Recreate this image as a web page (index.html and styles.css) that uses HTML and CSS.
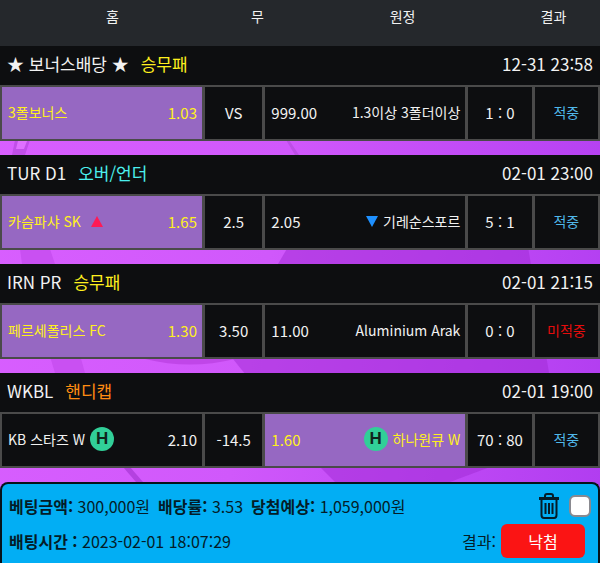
FILE: index.html
```
<!DOCTYPE html>
<html lang="ko">
  <head>
    <meta charset="UTF-8" />
    <meta name="viewport" content="width=device-width, initial-scale=1.0" />
    <title>베팅내역</title>
    <link rel="stylesheet" href="styles.css">
  </head>
  <body>
    <svg class="bg" viewBox="0 0 600 563" preserveAspectRatio="none" aria-hidden="true">
      <path d="M12 155L15 140H30L25 155Z" fill="#c04fe8" />
      <path d="M16 149L18 141H27L24 149Z" fill="#df70ff" />
      <path d="M286 140H289L299 155H295Z" fill="#bd4ee6" />
      <path d="M20 249H50L55 264L85 373H55L22 264Z" fill="#c950f2" />
      <path d="M295 235H526L549 373L490 467L450 482H335L320 467L233 359L278 264Z" fill="#a02ad4" fill-opacity="0.5" />
      <path d="M145 359Q190 370 235 359Z" fill="#c046e8" />
      <path d="M123 467H130L143 482H136Z" fill="#b441e0" />
    </svg>
    <div class="head">
      <span class="head-team">홈</span>
      <span class="head-draw">무</span>
      <span class="head-team">원정</span>
      <span class="head-result">결과</span>
    </div>

    <div class="game">
      <div class="title">
        <span>★ 보너스배당 ★</span>
        <span class="type yellow">승무패</span>
        <span class="date">12-31 23:58</span>
      </div>
      <table>
        <tr>
          <td class="team on"><div class="pick"><span>3폴보너스</span><span class="odds">1.03</span></div></td>
          <td class="draw">VS</td>
          <td class="team"><div class="pick"><span class="odds">999.00</span><span>1.3이상 3폴더이상</span></div></td>
          <td class="score">1 : 0</td>
          <td class="result hit">적중</td>
        </tr>
      </table>
    </div>

    <div class="game">
      <div class="title">
        <span>TUR D1</span>
        <span class="type cyan">오버/언더</span>
        <span class="date">02-01 23:00</span>
      </div>
      <table>
        <tr>
          <td class="team on">
            <div class="pick">
              <span class="name">카슴파샤 SK <i class="up"></i></span>
              <span class="odds">1.65</span>
            </div>
          </td>
          <td class="draw">2.5</td>
          <td class="team">
            <div class="pick">
              <span class="odds">2.05</span>
              <span class="name"><i class="down"></i> 기레순스포르</span>
            </div>
          </td>
          <td class="score">5 : 1</td>
          <td class="result hit">적중</td>
        </tr>
      </table>
    </div>

    <div class="game">
      <div class="title">
        <span>IRN PR</span>
        <span class="type yellow">승무패</span>
        <span class="date">02-01 21:15</span>
      </div>
      <table>
        <tr>
          <td class="team on"><div class="pick"><span>페르세폴리스 FC</span><span class="odds">1.30</span></div></td>
          <td class="draw">3.50</td>
          <td class="team"><div class="pick"><span class="odds">11.00</span><span>Aluminium Arak</span></div></td>
          <td class="score">0 : 0</td>
          <td class="result miss">미적중</td>
        </tr>
      </table>
    </div>

    <div class="game">
      <div class="title">
        <span>WKBL</span>
        <span class="type orange">핸디캡</span>
        <span class="date">02-01 19:00</span>
      </div>
      <table>
        <tr>
          <td class="team">
            <div class="pick">
              <span class="name">KB 스타즈 W <b class="badge">H</b></span>
              <span class="odds">2.10</span>
            </div>
          </td>
          <td class="draw">-14.5</td>
          <td class="team on">
            <div class="pick">
              <span class="odds">1.60</span>
              <span class="name"><b class="badge">H</b> 하나원큐 W</span>
            </div>
          </td>
          <td class="score">70 : 80</td>
          <td class="result hit">적중</td>
        </tr>
      </table>
    </div>

    <div class="summary">
      <div class="line">
        <div class="info">
          <span><b>베팅금액:</b> 300,000원</span>
          <span><b>배당률:</b> 3.53</span>
          <span><b>당첨예상:</b> 1,059,000원</span>
        </div>
        <button class="delete" type="button" aria-label="삭제">
          <svg width="22" height="26" viewBox="0 0 22 26" fill="none" stroke="#041c28" stroke-width="2">
            <path d="M1 5.5H21" stroke-width="3" />
            <path d="M7 5V3Q7 1 9 1H13Q15 1 15 3V5" />
            <path d="M3.500 6V22Q3.500 25 6 25H16Q18.500 25 18.500 22V6" />
            <path d="M7.500 10V21M11 10V21M14.500 10V21" />
          </svg>
        </button>
        <input class="check" type="checkbox" aria-label="선택" />
      </div>
      <div class="line">
        <div class="info"><span><b>배팅시간 :</b> 2023-02-01 18:07:29</span></div>
        <span>결과:</span>
        <button class="status" type="button">낙첨</button>
      </div>
    </div>
  </body>
</html>
```
FILE: styles.css
```
* {
  box-sizing: border-box;
}
body {
  margin: 0;
  background: linear-gradient(100deg, #d95fff 0%, #d058fb 45%, #b03cf0 100%);
  color: #f2f2f2;
  font-family: "Noto Sans CJK KR", sans-serif;
  font-size: 14px;
}
.bg {
  position: absolute;
  top: 0;
  left: 0;
  width: 100%;
  height: 100%;
  z-index: -1;
}
.head {
  display: flex;
  height: 46px;
  padding: 5px 8px 0 0;
  background: #25282c;
  line-height: 22px;
  text-align: center;
}
.head-team {
  width: 38%;
}
.head-draw {
  width: 11%;
}
.head-result {
  width: 13%;
}
.game {
  margin-bottom: 14px;
}
.title {
  display: flex;
  height: 39px;
  padding: 0 7px;
  background: #0d0e10;
  font-size: 17px;
  line-height: 36px;
}
.type {
  margin-left: 12px;
}
.date {
  margin-left: auto;
}
.yellow {
  color: #fff01e;
}
.cyan {
  color: #4cf0ee;
}
.orange {
  color: #ff8c12;
}
table {
  width: 100%;
  height: 56px;
  table-layout: fixed;
  border-spacing: 1px;
  background: #4a4a4a;
}
td {
  padding: 0 0 2px;
  border: 1px solid #4a4a4a;
  background: #0d0e10;
  text-align: center;
}
.team {
  width: 34%;
  padding: 0 5px 2px 6px;
}
.draw {
  width: 10%;
  font-size: 15px;
}
.score {
  width: 11%;
  font-size: 15px;
}
.result {
  width: 11%;
}
.pick {
  display: flex;
  align-items: center;
  justify-content: space-between;
}
.odds {
  font-size: 15px;
}
.on {
  background: #9668c2;
  color: #fff01e;
}
.hit {
  color: #50b8ea;
}
.miss {
  color: #e60c0c;
}
.name {
  display: flex;
  align-items: center;
  gap: 5px;
}
.up,
.down {
  border: 6px solid transparent;
}
.up {
  margin-left: 5px;
  border-top: 0;
  border-bottom: 11px solid #ff1a55;
}
.down {
  border-bottom: 0;
  border-top: 11px solid #1e90ff;
}
.badge {
  width: 24px;
  height: 24px;
  border-radius: 50%;
  background: #31cf98;
  color: #10241c;
  font-family: "Liberation Sans", sans-serif;
  font-size: 17px;
  line-height: 24px;
  text-align: center;
}
.summary {
  padding: 4px 7px 5px;
  border: 2px solid #06121a;
  border-bottom: 0;
  border-radius: 8px 8px 0 0;
  background: #02aef4;
  color: #041c28;
  font-size: 16px;
}
.line {
  display: flex;
  align-items: center;
  height: 35px;
}
.info {
  display: flex;
  gap: 8px;
  margin-right: auto;
}
.delete {
  display: flex;
  padding: 0;
  border: 0;
  background: none;
}
.check {
  appearance: none;
  width: 22px;
  height: 22px;
  margin: 0 0 0 9px;
  border: 2px solid #8a8a90;
  border-radius: 6px;
  background: #fff;
}
.status {
  width: 84px;
  height: 34px;
  margin: 0 6px 0 5px;
  border: 0;
  border-radius: 6px;
  background: #fb1414;
  color: #fff;
  font-family: inherit;
  font-size: 16px;
}
```
